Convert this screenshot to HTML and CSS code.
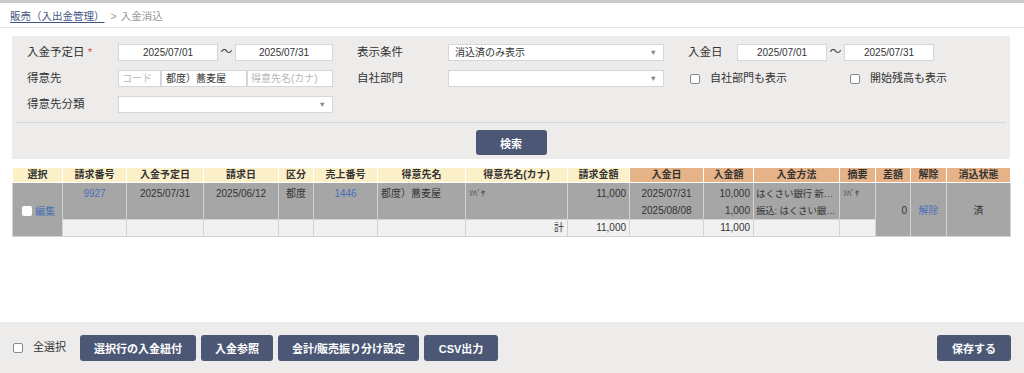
FILE: index.html
```html
<!DOCTYPE html>
<html lang="ja">
<head>
<meta charset="utf-8">
<link rel="stylesheet" href="styles.css">
</head>
<body>
<div class="page">
  <div class="topbar"></div>
  <div class="crumbs"><a class="crumb-link">販売（入出金管理）</a><span class="crumb-sep">&gt;</span><span class="crumb-cur">入金消込</span></div>
  <div class="panel">
    <div class="frow">
      <div class="g1">
        <span class="lbl">入金予定日 <span class="req">*</span></span>
        <span class="inp date1">2025/07/01</span><span class="tilde">〜</span><span class="inp date1b">2025/07/31</span>
      </div>
      <div class="g2">
        <span class="lbl">表示条件</span>
        <span class="sel w216">消込済のみ表示<span class="arr">▼</span></span>
      </div>
      <div class="g3">
        <span class="lbl lbl3">入金日</span>
        <span class="inp date2">2025/07/01</span><span class="tilde">〜</span><span class="inp date2">2025/07/31</span>
      </div>
    </div>
    <div class="frow">
      <div class="g1">
        <span class="lbl">得意先</span>
        <span class="inp code ph">コード</span><span class="inp name">都度）蕎麦屋</span><span class="inp kana ph">得意先名(カナ)</span>
      </div>
      <div class="g2">
        <span class="lbl">自社部門</span>
        <span class="sel w216"><span class="arr">▼</span></span>
      </div>
      <div class="g3 checks">
        <label class="chk c1"><span class="box"></span>自社部門も表示</label>
        <label class="chk"><span class="box"></span>開始残高も表示</label>
      </div>
    </div>
    <div class="frow">
      <div class="g1">
        <span class="lbl">得意先分類</span>
        <span class="sel w215"><span class="arr">▼</span></span>
      </div>
    </div>
    <div class="hr"></div>
    <div class="search-row"><button class="btn btn-search">検索</button></div>
  </div>

  <table class="grid">
    <colgroup>
      <col style="width:50px"><col style="width:64px"><col style="width:77px"><col style="width:75px">
      <col style="width:35px"><col style="width:64px"><col style="width:88px"><col style="width:102px">
      <col style="width:62px"><col style="width:74px"><col style="width:50px"><col style="width:86px">
      <col style="width:36px"><col style="width:35px"><col style="width:36px"><col style="width:64px">
    </colgroup>
    <thead>
      <tr>
        <th>選択</th><th>請求番号</th><th>入金予定日</th><th>請求日</th><th>区分</th><th>売上番号</th><th>得意先名</th><th>得意先名(カナ)</th><th>請求金額</th>
        <th class="o">入金日</th><th class="o">入金額</th><th class="o">入金方法</th><th class="o">摘要</th><th class="o">差額</th><th class="o">解除</th><th class="o">消込状態</th>
      </tr>
    </thead>
    <tbody>
      <tr class="data">
        <td rowspan="2" class="sel-cell"><span class="tbox"></span><a class="lnk">編集</a></td>
        <td class="c"><a class="lnk">9927</a></td>
        <td class="c">2025/07/31</td>
        <td class="c">2025/06/12</td>
        <td class="c">都度</td>
        <td class="c"><a class="lnk">1446</a></td>
        <td class="l">都度）蕎麦屋</td>
        <td class="l small">ｿﾊﾞﾔ</td>
        <td class="r">11,000</td>
        <td class="c">2025/07/31<br>2025/08/08</td>
        <td class="r">10,000<br>1,000</td>
        <td class="l meth">はくさい銀行 新…<br>振込: はくさい銀…</td>
        <td class="l small">ｿﾊﾞﾔ</td>
        <td rowspan="2" class="r mid">0</td>
        <td rowspan="2" class="c mid"><a class="lnk">解除</a></td>
        <td rowspan="2" class="c mid">済</td>
      </tr>
      <tr class="total">
        <td></td><td></td><td></td><td></td><td></td><td></td>
        <td class="r">計</td>
        <td class="r">11,000</td>
        <td></td>
        <td class="r">11,000</td>
        <td></td><td></td>
      </tr>
    </tbody>
  </table>

  <div class="spacer"></div>

  <div class="footer">
    <div class="fleft">
      <label class="chk allsel"><span class="box"></span>全選択</label>
      <button class="btn b1">選択行の入金紐付</button>
      <button class="btn b2">入金参照</button>
      <button class="btn b3">会計/販売振り分け設定</button>
      <button class="btn b4">CSV出力</button>
    </div>
    <button class="btn b5">保存する</button>
  </div>
</div>
</body>
</html>
```

FILE: styles.css
```css
* { box-sizing: border-box; }
html, body { margin: 0; padding: 0; background: #fff; }
body {
  font-family: "Liberation Sans", "Noto Sans CJK JP", sans-serif;
  font-size: 11px;
  color: #333;
}
.page { width: 1024px; height: 373px; display: flex; flex-direction: column; overflow: hidden; }
.topbar { height: 3px; background: #c9c9c9; }
.crumbs {
  height: 25px;
  padding: 5px 0 0 10px;
  border-bottom: 1px solid #e3e3e3;
  font-size: 10.5px;
  line-height: 16px;
}
.crumb-link { color: #3f5583; text-decoration: underline; text-underline-offset: 2px; }
.crumb-sep { color: #999; margin: 0 4px 0 6px; }
.crumb-cur { color: #999; }

.panel {
  margin: 8px 14px 0 12px;
  background: #edeceb;
  padding: 8px 0 0 15px;
  height: 123px;
}
.frow { display: flex; height: 26px; align-items: flex-start; }
.g1 { display: flex; align-items: center; width: 306px; }
.g2 { display: flex; align-items: center; width: 307px; margin-left: 24px; }
.g3 { display: flex; align-items: center; margin-left: 24px; }
.lbl { width: 91px; flex: none; font-size: 11.5px; line-height: 17px; color: #333; }
.lbl3 { width: 49px; }
.req { color: #d9534f; }
.inp, .sel {
  height: 17px;
  background: #fff;
  border: 1px solid #d6d6d6;
  font-size: 10px;
  line-height: 15px;
  color: #333;
  flex: none;
  white-space: nowrap;
  overflow: hidden;
}
.inp { text-align: center; }
.date1 { width: 100px; }
.date1b { width: 98px; }
.date2 { width: 90px; }
.tilde { width: 17px; text-align: center; font-size: 12px; line-height: 17px; color: #444; }
.code { width: 43px; text-align: left; padding-left: 3px; }
.name { width: 86px; text-align: left; padding-left: 4px; }
.kana { width: 86px; text-align: left; padding-left: 3px; }
.ph { color: #b5b5b5; }
.sel { position: relative; padding-left: 6px; }
.w216 { width: 216px; }
.w215 { width: 215px; }
.arr { position: absolute; right: 6px; top: 0; font-size: 7.5px; color: #888; line-height: 15px; }
.chk { display: inline-flex; align-items: center; font-size: 11px; line-height: 17px; color: #333; }
.c1 { margin-left: 2px; width: 160px; }
.box {
  width: 10px; height: 10px; border: 1px solid #8a8a8a; border-radius: 2px; background: #fff;
  margin-right: 10px; flex: none;
}
.hr { height: 1px; background: #d7d7d7; margin: 0 4px 0 -11px; }
.search-row { display: flex; justify-content: center; padding-top: 7px; padding-right: 15px; }
.btn {
  border: none;
  background: #4b5775;
  color: #fff;
  font-family: "Liberation Sans", "Noto Sans CJK JP", sans-serif;
  font-weight: bold;
  font-size: 11px;
  border-radius: 3px;
  height: 26px;
  padding: 0;
}
.btn-search { width: 71px; height: 25px; }

.grid {
  margin: 9px 0 0 12px;
  width: 998px;
  table-layout: fixed;
  border-collapse: collapse;
  font-size: 10px;
}
.grid th {
  background: #fcf0c9;
  font-weight: bold;
  height: 14px;
  line-height: 12px;
  padding: 0;
  text-align: center;
  border: 1px solid #fff;
  border-top: none;
  color: #333;
  font-size: 10px;
}
.grid th.o { background: #e6b287; }
.grid td {
  border: 1px solid #d3d3d3;
  padding: 2px 3px 0 3px;
  vertical-align: top;
  line-height: 17px;
  white-space: nowrap;
  overflow: hidden;
}
.data td { background: #a6a6a6; height: 35px; color: #333; }
.total td { background: #f1f1f1; height: 17px; padding-top: 0; line-height: 16px; }
.grid td.mid { vertical-align: middle; background: #a6a6a6; }
.grid td.sel-cell { vertical-align: middle; background: #a6a6a6; padding-left: 9px; padding-top: 4px; }
.tbox { display: inline-block; width: 10px; height: 10px; background: #fff; border-radius: 2px; vertical-align: -1px; margin-right: 3px; }
.c { text-align: center; }
.r { text-align: right; }
.l { text-align: left; }
.small { font-size: 8px; }
.grid td.meth { font-size: 9.5px; padding-left: 2px; padding-right: 0; letter-spacing: -0.2px; }
.lnk { color: #4a6fb8; }

.spacer { flex: 1; }
.footer {
  height: 51px;
  background: #edeceb;
  display: flex;
  align-items: center;
  justify-content: space-between;
  padding: 0 13px 0 13px;
}
.fleft { display: flex; align-items: center; }
.allsel { margin-right: 14px; }
.fleft .btn { margin-right: 5px; }
.b1 { width: 116px; }
.b2 { width: 72px; }
.b3 { width: 141px; }
.b4 { width: 74px; }
.b5 { width: 74px; }
```
